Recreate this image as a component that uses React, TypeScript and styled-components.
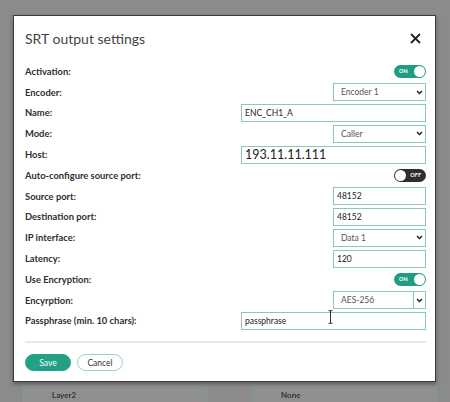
import React from "react";
import styled, { createGlobalStyle } from "styled-components";

const GlobalStyle = createGlobalStyle`
  html, body { margin: 0; padding: 0; }
  body { font-family: Lato, "Open Sans", sans-serif; }
`;

const TEAL = "#1f9c83";
const FIELD_BORDER = "#8cc8b8";

const Page = styled.div`
  position: relative;
  width: 450px;
  height: 402px;
  overflow: hidden;
  background: #8b8b8b;
`;

// blurred page content behind the dialog
const Behind = styled.div`
  display: flex;
  flex-direction: column;
  justify-content: flex-end;
  height: 100%;
  filter: blur(0.6px);
`;

const BehindRow = styled.div`
  display: flex;
  gap: 44px;
  padding-left: 23px;
  margin-bottom: -10px;
`;

const BehindField = styled.div<{ $w: number }>`
  width: ${(p) => p.$w}px;
  height: 26px;
  box-sizing: border-box;
  border: 1.5px solid #7d9c94;
  background: #8f8f8f;
  font-size: 8px;
  color: #333;
  padding: 3px 28px;
  font-weight: bold;
`;

const Modal = styled.div`
  position: absolute;
  left: 13px;
  top: 15px;
  width: 423px;
  height: 367px;
  box-sizing: border-box;
  border: 1px solid #3a3a3a;
  background: #fff;
  padding: 0 9px 0 11px;
  box-shadow: 0 2px 4px rgba(0, 0, 0, 0.35);
`;

const Header = styled.div`
  height: 45px;
  display: flex;
  align-items: center;
  justify-content: space-between;
`;

const Title = styled.h2`
  margin: 0;
  font-size: 14px;
  font-weight: normal;
  color: #444;
`;

const Close = styled.div`
  width: 11px;
  height: 11px;
  margin-right: 5px;
  display: flex;
`;

const Body = styled.div`
  display: flex;
  flex-direction: column;
`;

const Row = styled.div`
  height: 20.8px;
  display: flex;
  align-items: center;
  justify-content: space-between;
`;

const Label = styled.div`
  font-size: 9.4px;
  font-weight: bold;
  color: #2e2e2e;
`;

const FieldWrap = styled.div`
  position: relative;
  display: flex;
`;

const Field = styled.input<{ $wide?: boolean; $big?: boolean }>`
  width: ${(p) => (p.$wide ? 185 : 93)}px;
  height: 18px;
  box-sizing: border-box;
  border: 1.6px solid ${FIELD_BORDER};
  padding: 0 3px;
  margin: 0;
  outline: none;
  font-family: Lato, "Open Sans", sans-serif;
  font-size: ${(p) => (p.$big ? 12.5 : 8.5)}px;
  color: #222;
  background: #fff;
`;

const SelectBox = styled.div`
  width: 93px;
  height: 18px;
  box-sizing: border-box;
  border: 1.6px solid ${FIELD_BORDER};
  display: flex;
  align-items: center;
  font-size: 8.5px;
  color: #555;
`;

const SelectValue = styled.span`
  flex: 1;
  padding-left: 7px;
`;

const Chevron = styled.span<{ $divided?: boolean }>`
  display: flex;
  align-items: center;
  justify-content: center;
  width: ${(p) => (p.$divided ? 11 : 12)}px;
  align-self: stretch;
  border-left: ${(p) => (p.$divided ? `1.6px solid ${FIELD_BORDER}` : "none")};
`;

const Toggle = styled.div<{ $on: boolean }>`
  width: 32px;
  height: 13px;
  border-radius: 7px;
  background: ${(p) => (p.$on ? TEAL : "#2e2e2e")};
  display: flex;
  flex-direction: ${(p) => (p.$on ? "row" : "row-reverse")};
  align-items: center;
  justify-content: space-between;
  padding-left: ${(p) => (p.$on ? 5 : 1)}px;
  padding-right: ${(p) => (p.$on ? 1 : 5)}px;
  box-sizing: border-box;
  font-size: 5.5px;
  font-weight: bold;
  color: #fff;
`;

const Knob = styled.span`
  width: 11px;
  height: 11px;
  border-radius: 50%;
  background: #fff;
`;

const Cursor = styled.svg`
  position: absolute;
  left: 87px;
  top: -2px;
`;

const Divider = styled.div`
  height: 2px;
  background: #e8e8e8;
  margin-top: 10px;
`;

const Footer = styled.div`
  display: flex;
  gap: 6px;
  margin-top: 11px;
`;

const Button = styled.button<{ $primary?: boolean }>`
  width: 46px;
  height: 17px;
  border-radius: 9px;
  box-sizing: border-box;
  padding: 0;
  font-family: Lato, "Open Sans", sans-serif;
  font-size: 8.5px;
  cursor: pointer;
  background: ${(p) => (p.$primary ? "#23a088" : "#fff")};
  color: ${(p) => (p.$primary ? "#fff" : "#333")};
  border: 1.5px solid ${(p) => (p.$primary ? "#23a088" : "#95d3c4")};
`;

const ChevronIcon = () => (
  <svg width="7" height="5" viewBox="0 0 7 5">
    <path d="M1 1 L3.5 3.5 L6 1" fill="none" stroke="#222" strokeWidth="1.5" />
  </svg>
);

const Select = ({ value, divided }: { value: string; divided?: boolean }) => (
  <SelectBox>
    <SelectValue>{value}</SelectValue>
    <Chevron $divided={divided}>
      <ChevronIcon />
    </Chevron>
  </SelectBox>
);

const Switch = ({ on }: { on: boolean }) => (
  <Toggle $on={on}>
    <span>{on ? "ON" : "OFF"}</span>
    <Knob />
  </Toggle>
);

export default function App() {
  return (
    <Page>
      <GlobalStyle />
      <Behind>
        <BehindRow>
          <BehindField $w={185}>Layer2</BehindField>
          <BehindField $w={185}>None</BehindField>
        </BehindRow>
      </Behind>
      <Modal>
        <Header>
          <Title>SRT output settings</Title>
          <Close>
            <svg width="11" height="11" viewBox="0 0 11 11">
              <path d="M1 1 L10 10 M10 1 L1 10" stroke="#222" strokeWidth="1.8" />
            </svg>
          </Close>
        </Header>
        <Body>
          <Row>
            <Label>Activation:</Label>
            <Switch on />
          </Row>
          <Row>
            <Label>Encoder:</Label>
            <Select value="Encoder 1" />
          </Row>
          <Row>
            <Label>Name:</Label>
            <Field $wide defaultValue="ENC_CH1_A" />
          </Row>
          <Row>
            <Label>Mode:</Label>
            <Select value="Caller" />
          </Row>
          <Row>
            <Label>Host:</Label>
            <Field $wide $big defaultValue="193.11.11.111" />
          </Row>
          <Row>
            <Label>Auto-configure source port:</Label>
            <Switch on={false} />
          </Row>
          <Row>
            <Label>Source port:</Label>
            <Field defaultValue="48152" />
          </Row>
          <Row>
            <Label>Destination port:</Label>
            <Field defaultValue="48152" />
          </Row>
          <Row>
            <Label>IP interface:</Label>
            <Select value="Data 1" />
          </Row>
          <Row>
            <Label>Latency:</Label>
            <Field defaultValue="120" />
          </Row>
          <Row>
            <Label>Use Encryption:</Label>
            <Switch on />
          </Row>
          <Row>
            <Label>Encyrption:</Label>
            <Select value="AES-256" divided />
          </Row>
          <Row>
            <Label>Passphrase (min. 10 chars):</Label>
            <FieldWrap>
              <Field $wide defaultValue="passphrase" />
              <Cursor width="5" height="14" viewBox="0 0 5 14">
                <path d="M0.5 0.7 H4.5 M2.5 0.7 V13.3 M0.5 13.3 H4.5" stroke="#333" strokeWidth="1" fill="none" />
              </Cursor>
            </FieldWrap>
          </Row>
        </Body>
        <Divider />
        <Footer>
          <Button $primary>Save</Button>
          <Button>Cancel</Button>
        </Footer>
      </Modal>
    </Page>
  );
}
